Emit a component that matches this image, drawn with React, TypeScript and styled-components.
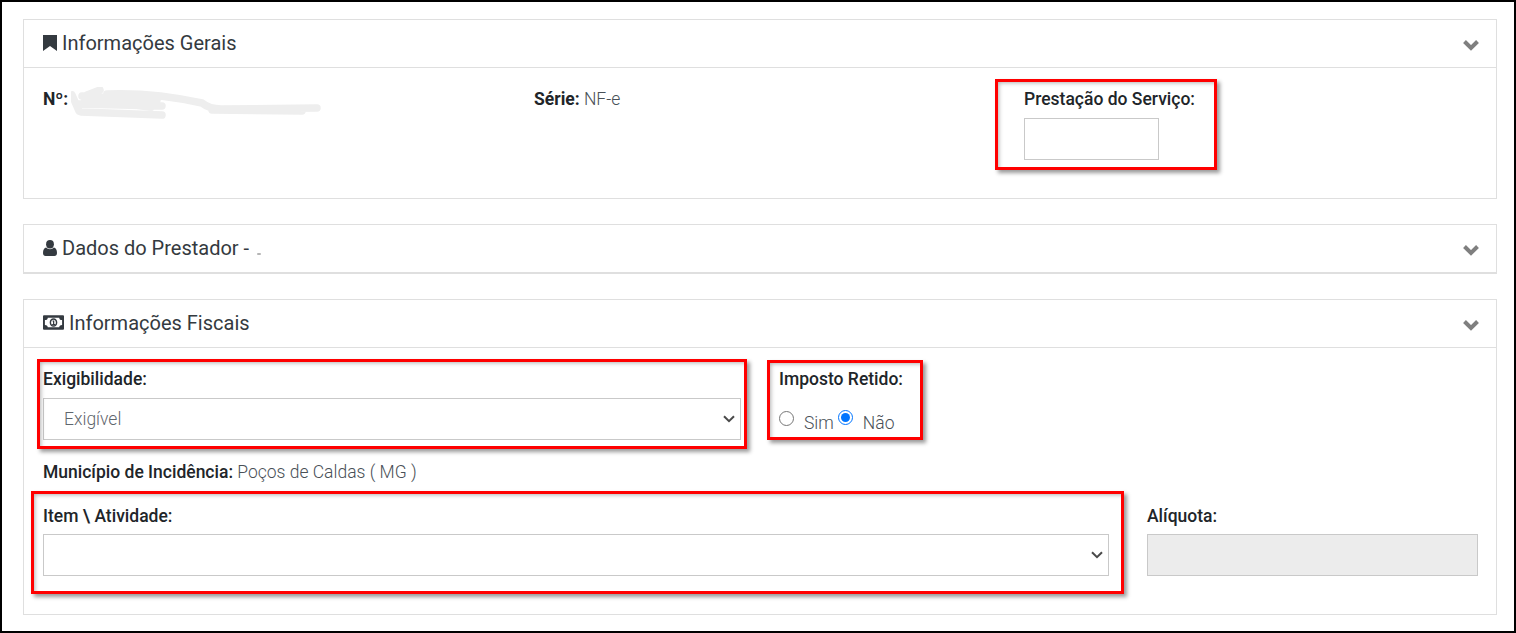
import styled, { createGlobalStyle } from 'styled-components'

const GlobalStyle = createGlobalStyle`
  html, body {
    margin: 0;
    padding: 0;
    background: #fff;
  }
  body {
    font-family: Roboto, "Liberation Sans", sans-serif;
    font-size: 17.5px;
    line-height: 24px;
    color: #212529;
  }
`

const Page = styled.div`
  position: relative;
  box-sizing: border-box;
  width: 1516px;
  height: 633px;
  padding: 17px 17px 0 21px;
  border: 2px solid #000;
  background: #fff;
  overflow: hidden;
  display: flex;
  flex-direction: column;
  gap: 25px;
`

const Panel = styled.section<{ $heavy?: boolean }>`
  border: 1px solid #dfdfdf;
  border-bottom-width: ${({ $heavy }) => ($heavy ? '2px' : '1px')};
  background: #fff;
`

const PanelHeader = styled.header<{ $open?: boolean }>`
  box-sizing: content-box;
  display: flex;
  align-items: center;
  justify-content: space-between;
  height: 45px;
  padding: 0 16px 2px 19px;
  border-bottom: ${({ $open }) => ($open ? '1px solid #dfdfdf' : '0')};
`

const PanelTitle = styled.h2`
  display: flex;
  align-items: center;
  gap: 5px;
  margin: 0;
  font-size: 20px;
  font-weight: 400;
  line-height: 24px;
  color: #343a40;
`

const TitleIcon = styled.svg`
  display: block;
  flex: none;
  color: #343a40;
`

const TitleSpeck = styled.span`
  width: 4px;
  height: 2px;
  margin: 12px 0 0 3px;
  border-radius: 1px;
  background: #b5b5b5;
`

const Toggle = styled.svg`
  display: block;
  margin-top: 5px;
  color: #7f7f7f;
`

const InfoBody = styled.div`
  display: grid;
  grid-template-columns: 491px 490px 1fr;
  height: 130px;
  box-sizing: border-box;
  padding: 19px 19px 0;
`

const FiscalBody = styled.div`
  display: flex;
  flex-direction: column;
  gap: 20px;
  padding: 19px 18px 38px 19px;
`

const FieldRow = styled.div`
  display: flex;
  gap: 38px;
`

const Field = styled.div<{ $width: number; $tight?: boolean }>`
  display: flex;
  flex-direction: column;
  gap: ${({ $tight }) => ($tight ? '6px' : '7px')};
  width: ${({ $width }) => $width}px;
`

const Label = styled.label`
  font-weight: 500;
  color: #212529;
  white-space: nowrap;
`

const Line = styled.div`
  font-weight: 300;
  color: #495057;
  white-space: nowrap;
`

const Strong = styled.strong<{ $medium?: boolean }>`
  font-weight: ${({ $medium }) => ($medium ? 500 : 700)};
  color: #212529;
`

const Redaction = styled.span`
  position: relative;
`

const Scribble = styled.svg`
  position: absolute;
  left: 3px;
  top: -2px;
`

const TextBox = styled.input`
  box-sizing: border-box;
  width: 100%;
  height: 42px;
  padding: 0 20px;
  border: 1px solid #c9c9c9;
  border-radius: 0;
  outline: 0;
  background: ${({ disabled }) => (disabled ? '#ececec' : '#fff')};
  font: 300 17.5px Roboto, sans-serif;
  color: #495057;
`

const selectArrow = encodeURIComponent(
  '<svg xmlns="http://www.w3.org/2000/svg" width="12" height="8" viewBox="0 0 12 8"><path d="M1 1.2 L6 6.2 L11 1.2" fill="none" stroke="#4a4a4a" stroke-width="2"/></svg>'
)

const Select = styled.select`
  appearance: none;
  box-sizing: border-box;
  width: 100%;
  height: 42px;
  padding: 0 20px;
  border: 1px solid #c9c9c9;
  border-radius: 0;
  outline: 0;
  background: #fff url("data:image/svg+xml,${selectArrow}") no-repeat right 5.5px center;
  font: 300 17.5px Roboto, sans-serif;
  color: #5f666d;
`

const RadioGroup = styled.div`
  display: flex;
  align-items: flex-start;
  margin-top: 9px;
  font-weight: 300;
  color: #495057;
`

const Radio = styled.input<{ $raised?: boolean }>`
  width: 15px;
  height: 15px;
  margin: ${({ $raised }) => ($raised ? '3px' : '4px')} 0 0;
`

const RadioLabel = styled.span`
  margin: 4px 4px 0 10px;
  &:last-child {
    margin-right: 0;
  }
`

const Highlight = styled.div<{ $left: number; $top: number; $width: number; $height: number }>`
  position: absolute;
  box-sizing: border-box;
  left: ${({ $left }) => $left - 2}px;
  top: ${({ $top }) => $top - 2}px;
  width: ${({ $width }) => $width}px;
  height: ${({ $height }) => $height}px;
  border: 3px solid #f00;
  box-shadow: 3px 3px 4px rgba(0, 0, 0, 0.4), inset 3px 3px 4px -2px rgba(0, 0, 0, 0.3);
  pointer-events: none;
`

const Chevron = () => (
  <Toggle width="18" height="14" viewBox="0 0 18 14" fill="none">
    <path d="M2.5 3.5 L9 10 L15.5 3.5" stroke="currentColor" strokeWidth="4" />
  </Toggle>
)

export default function App() {
  return (
    <Page>
      <GlobalStyle />

      <Panel>
        <PanelHeader $open>
          <PanelTitle>
            <TitleIcon width="14" height="16" viewBox="0 0 14 16" fill="currentColor">
              <path d="M0 0 H14 V16 L7 11 L0 16 Z" />
            </TitleIcon>
            Informações Gerais
          </PanelTitle>
          <Chevron />
        </PanelHeader>
        <InfoBody>
          <Line>
            <Strong>Nº:</Strong>{' '}
            <Redaction>
              <Scribble width="252" height="34" viewBox="0 0 252 34" fill="none">
                <path
                  d="M1 8 L8 24 M11 9 L86 13 M8 17 L91 19 M10 25 L91 28 M29 3 L16 8 M14 13 L80 20 M36 7 C60 6 90 7 131 16 C136 20 141 22 150 22 L246 21 M141 23 L231 24"
                  stroke="#eeeeee"
                  strokeWidth="7.5"
                  strokeLinecap="round"
                />
              </Scribble>
            </Redaction>
          </Line>
          <Line>
            <Strong>Série:</Strong> NF-e
          </Line>
          <Field $width={135}>
            <Label>Prestação do Serviço:</Label>
            <TextBox readOnly />
          </Field>
        </InfoBody>
      </Panel>

      <Panel $heavy>
        <PanelHeader>
          <PanelTitle>
            <TitleIcon width="14" height="16" viewBox="0 0 14 16" fill="currentColor">
              <ellipse cx="7" cy="4.2" rx="3.9" ry="4.2" />
              <path d="M0 13 C0 10 1.2 8 3.2 7.6 C4.2 8.6 5.5 9.2 7 9.2 C8.5 9.2 9.8 8.6 10.8 7.6 C12.8 8 14 10 14 13 C14 15 13 16 11.5 16 H2.5 C1 16 0 15 0 13 Z" />
            </TitleIcon>
            Dados do Prestador -
            <TitleSpeck />
          </PanelTitle>
          <Chevron />
        </PanelHeader>
      </Panel>

      <Panel>
        <PanelHeader $open>
          <PanelTitle>
            <TitleIcon width="21" height="15" viewBox="0 0 22 15" fill="currentColor">
              <path
                fillRule="evenodd"
                d="M1 0 H21 A1 1 0 0 1 22 1 V14 A1 1 0 0 1 21 15 H1 A1 1 0 0 1 0 14 V1 A1 1 0 0 1 1 0 Z M5 2.5 C5 4 4 5 2 5 V10 C4 10 5 11 5 12.5 H17 C17 11 18 10 20 10 V5 C18 5 17 4 17 2.5 Z"
              />
              <path
                fillRule="evenodd"
                d="M11 3 C13.4 3 15 5 15 7.5 C15 10 13.4 12 11 12 C8.6 12 7 10 7 7.5 C7 5 8.6 3 11 3 Z M11 4.5 C9.5 4.5 8.5 5.8 8.5 7.5 C8.5 9.2 9.5 10.5 11 10.5 C12.5 10.5 13.5 9.2 13.5 7.5 C13.5 5.8 12.5 4.5 11 4.5 Z"
              />
              <path d="M10 5.5 H11.8 V9 H12.6 V10 H9.6 V9 H10.5 V6.5 H10 Z" />
            </TitleIcon>
            Informações Fiscais
          </PanelTitle>
          <Chevron />
        </PanelHeader>
        <FiscalBody>
          <FieldRow>
            <Field $width={698}>
              <Label>Exigibilidade:</Label>
              <Select defaultValue="Exigível">
                <option>Exigível</option>
              </Select>
            </Field>
            <Field $width={200}>
              <Label>Imposto Retido:</Label>
              <RadioGroup>
                <Radio type="radio" name="retido" />
                <RadioLabel>Sim</RadioLabel>
                <Radio type="radio" name="retido" $raised defaultChecked />
                <RadioLabel>Não</RadioLabel>
              </RadioGroup>
            </Field>
          </FieldRow>
          <Line>
            <Strong $medium>Município de Incidência:</Strong> Poços de Caldas ( MG )
          </Line>
          <FieldRow>
            <Field $width={1066} $tight>
              <Label>Item \ Atividade:</Label>
              <Select />
            </Field>
            <Field $width={331} $tight>
              <Label>Alíquota:</Label>
              <TextBox disabled />
            </Field>
          </FieldRow>
        </FiscalBody>
      </Panel>

      <Highlight $left={995} $top={79} $width={222} $height={91} />
      <Highlight $left={37} $top={359} $width={710} $height={90} />
      <Highlight $left={767} $top={360} $width={156} $height={80} />
      <Highlight $left={31} $top={491} $width={1093} $height={103} />
    </Page>
  )
}
